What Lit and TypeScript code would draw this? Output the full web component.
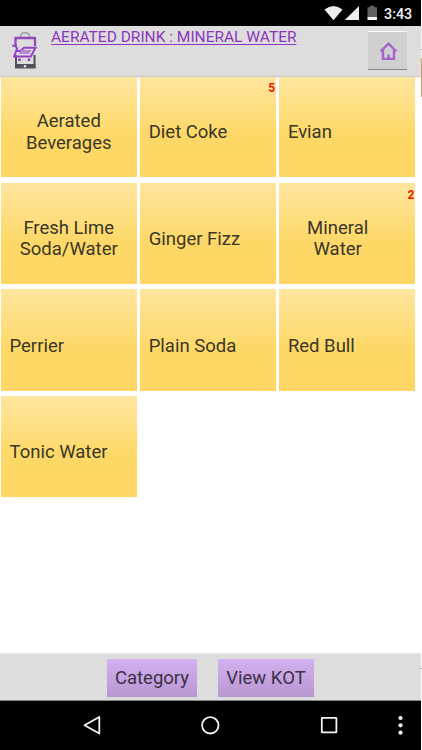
import { LitElement, html, css, nothing } from "lit";
import { customElement } from "lit/decorators.js";
import { classMap } from "lit/directives/class-map.js";

interface Item {
  lines: string[];
  count?: number;
}

const ITEMS: Item[] = [
  { lines: ["Aerated", "Beverages"] },
  { lines: ["Diet Coke"], count: 5 },
  { lines: ["Evian"] },
  { lines: ["Fresh Lime", "Soda/Water"] },
  { lines: ["Ginger Fizz"] },
  { lines: ["Mineral", "Water"], count: 2 },
  { lines: ["Perrier"] },
  { lines: ["Plain Soda"] },
  { lines: ["Red Bull"] },
  { lines: ["Tonic Water"] },
];

@customElement("status-bar")
class StatusBar extends LitElement {
  static styles = css`
    :host {
      display: flex;
      height: 26px;
      flex: none;
      background: #000;
      color: #f2f2f2;
      font: 500 14.3px/29px Roboto, sans-serif;
      justify-content: flex-end;
    }
    .icons { flex: none; }
    .time { width: 37px; white-space: nowrap; }
  `;
  render() {
    return html`
      <svg class="icons" width="61" height="26" viewBox="323 0 61 26">
        <path fill="#eee" d="M324.500 9.500Q333.500 2.500 342.500 9.500L333.500 20.300Z" />
        <path fill="#eee" d="M359 6V20H344.800Z" />
        <path fill="#606060" d="M367.500 7.200H370V5.800H374.500V7.200H377V17H367.500Z" />
        <path fill="#f4f4f4" d="M367.500 17H377V20H367.500Z" />
      </svg>
      <span class="time">3:43</span>
    `;
  }
}

@customElement("item-tile")
class ItemTile extends LitElement {
  static properties = { item: { attribute: false } };
  declare item: Item;
  static styles = css`
    :host {
      display: flex;
      position: relative;
      background: linear-gradient(#ffe6a0 0%, #fed866 60%, #fed665 100%);
      color: #3a3728;
      font: 400 18.5px/21.5px Roboto, sans-serif;
      text-align: center;
    }
    .label {
      flex: 1;
      display: flex;
      align-items: center;
      padding: 13px 9px 0 8.5px;
    }
    .double { flex-direction: column; justify-content: center; padding-top: 12px; }
    .double.counted { padding-right: 28px; }
    .count {
      position: absolute;
      top: 4px;
      right: 1px;
      font: 700 12px/16px Roboto, sans-serif;
      color: #ec1808;
    }
  `;
  render() {
    const { lines, count } = this.item;
    const classes = { label: true, double: lines.length > 1, counted: !!count };
    return html`
      <div class=${classMap(classes)}>
        ${lines.map((l) => html`<span>${l}</span>`)}
      </div>
      ${count ? html`<span class="count">${count}</span>` : nothing}
    `;
  }
}

@customElement("app-root")
class AppRoot extends LitElement {
  static styles = css`
    :host {
      display: grid;
      grid-template-columns: 421px 1px;
      height: 750px;
      overflow: hidden;
      background: #fff;
      font-family: Roboto, sans-serif;
    }
    .phone { display: flex; flex-direction: column; height: 750px; }
    .top {
      display: flex;
      flex: none;
      height: 50px;
      box-sizing: border-box;
      background: #ddd;
      box-shadow: 0 1px 1px #cfcabf;
      position: relative;
      z-index: 1;
    }
    .logo { flex: none; margin-left: 8px; }
    .title {
      margin-left: 11px;
      font-size: 15.5px;
      line-height: 22px;
      color: #8c36c0;
      text-decoration: underline;
      text-underline-offset: 2px;
      text-decoration-thickness: 1px;
      white-space: nowrap;
      flex: 1;
    }
    .home {
      box-sizing: border-box;
      width: 39px;
      height: 39px;
      margin: 5px 14.500px 0 0;
      padding: 0;
      border: 0 solid;
      border-width: 1px 0;
      border-color: #fafafa #fff #868686;
      background: #d0d0d0;
    }
    .home svg { display: block; }
    .grid {
      flex: 1;
      display: grid;
      grid-template-columns: repeat(3, 136px);
      grid-auto-rows: 101.200px;
      gap: 5.500px 3.200px;
      padding-left: 1px;
      align-content: start;
    }
    .bottom {
      display: flex;
      flex: none;
      justify-content: center;
      gap: 21px;
      height: 47px;
      box-sizing: border-box;
      padding-top: 5px;
      background: #ddd;
      border-bottom: 1px solid #858585;
      box-shadow: 0 -1px 1px #e8e8e8;
    }
    .action {
      height: 38px;
      padding: 0;
      border: 0;
      background: linear-gradient(#d3b1f0, #b996d1);
      color: #3b3144;
      font: 400 18.5px/37px Roboto, sans-serif;
    }
    .category { width: 90px; }
    .kot { width: 96px; }
    .nav { flex: none; display: block; background: #000; }
    .edge {
      background: linear-gradient(#fff 49px, #aaa 49px 50px, #fff 50px 58px, #dd9b50 58px 97px, #fff 97px 668px, #999 668px 669px, #fff 669px);
    }
  `;
  render() {
    return html`
      <div class="phone">
        <status-bar></status-bar>
        <header class="top">
          <svg class="logo" width="32" height="44" viewBox="8 26 32 44" fill="none">
            <path d="M20.500 37.500V36.500Q20.500 32.700 25 32.700T29.500 36.500V37.500" stroke="#a39aab" stroke-width="1.500" />
            <path d="M15.500 46V38H35V46" stroke="#9247bd" stroke-width="2.300" stroke-linejoin="round" />
            <path d="M16 55V67H34.500V55" stroke="#55505a" stroke-width="2" />
            <path d="M15 64H35.500V68.500H15Z" fill="#55505a" />
            <circle cx="25" cy="66.300" r="1.200" fill="#eee" />
            <path d="M12.300 45.800H15.500L17 48.500L14.200 56.500H30.800L35.500 47.700H24L20.500 51H16.500" stroke="#9440c4" stroke-width="2" />
            <path d="M21.500 50H31.500L29 54H18.500Z" fill="#b886d2" />
            <circle cx="19.500" cy="59.800" r="1.500" fill="#9440c4" />
            <circle cx="29" cy="59.800" r="1.500" fill="#9440c4" />
          </svg>
          <span class="title">AERATED DRINK : MINERAL WATER</span>
          <button class="home" aria-label="Home">
            <svg width="39" height="37" viewBox="367.500 32 39 37" fill="none" stroke="#a364cc" stroke-width="2.400">
              <path d="M380.200 51.300L388 43.600L395.800 51.300M382.500 50V58.900H393.500V50" />
              <path d="M388 54.500V59" />
            </svg>
          </button>
        </header>
        <main class="grid">
          ${ITEMS.map((item) => html`<item-tile .item=${item}></item-tile>`)}
        </main>
        <footer class="bottom">
          <button class="action category">Category</button>
          <button class="action kot">View KOT</button>
        </footer>
        <svg class="nav" width="421" height="49" viewBox="0 701 421 49" fill="none" stroke="#f2f2f2" stroke-width="1.800">
          <path d="M84.500 725.200L99.300 717V733.500Z" stroke-linejoin="round" />
          <circle cx="210.300" cy="725.300" r="8.200" />
          <rect x="321.800" y="717.800" width="14.600" height="14.600" rx="0.500" />
          <g fill="#f2f2f2" stroke="none">
            <circle cx="400.500" cy="718" r="2.100" />
            <circle cx="400.500" cy="725.300" r="2.100" />
            <circle cx="400.500" cy="732.700" r="2.100" />
          </g>
        </svg>
      </div>
      <div class="edge"></div>
    `;
  }
}
